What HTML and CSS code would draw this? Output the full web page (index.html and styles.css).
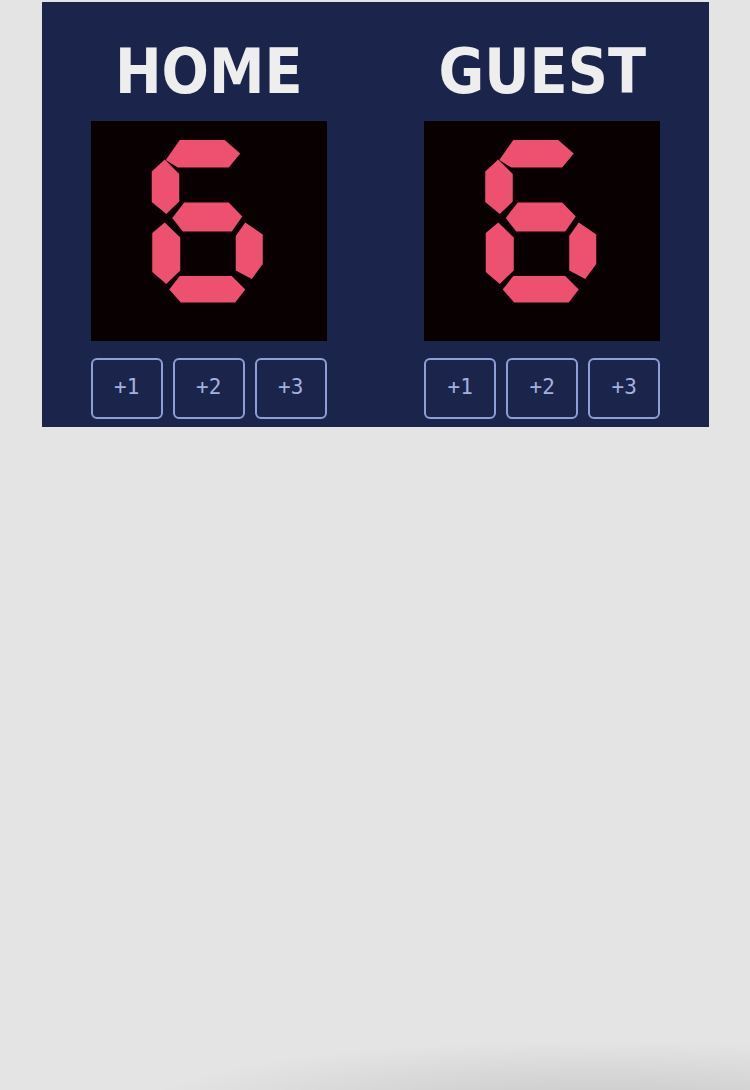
FILE: index.html
```html
<!DOCTYPE html>
<html lang="en">
<head>
<meta charset="utf-8">
<title>Scoreboard</title>
<link rel="stylesheet" href="styles.css">
</head>
<body>
<main class="scoreboard">
  <section class="team">
    <h2 class="team-name">HOME</h2>
    <div class="score-box">
      <div class="digit">
        <span class="seg seg-a"></span>
        <span class="seg seg-f"></span>
        <span class="seg seg-g"></span>
        <span class="seg seg-e"></span>
        <span class="seg seg-c"></span>
        <span class="seg seg-d"></span>
        <span class="digit-text">6</span>
      </div>
    </div>
    <div class="buttons">
      <button class="btn">+1</button>
      <button class="btn">+2</button>
      <button class="btn">+3</button>
    </div>
  </section>
  <section class="team">
    <h2 class="team-name">GUEST</h2>
    <div class="score-box">
      <div class="digit">
        <span class="seg seg-a"></span>
        <span class="seg seg-f"></span>
        <span class="seg seg-g"></span>
        <span class="seg seg-e"></span>
        <span class="seg seg-c"></span>
        <span class="seg seg-d"></span>
        <span class="digit-text">6</span>
      </div>
    </div>
    <div class="buttons">
      <button class="btn">+1</button>
      <button class="btn">+2</button>
      <button class="btn">+3</button>
    </div>
  </section>
</main>
</body>
</html>
```
FILE: styles.css
```css
html {
  height: 100%;
}
body {
  margin: 0;
  min-height: 100%;
  background-color: #e4e4e4;
  background-image: radial-gradient(ellipse 470px 72px at 600px 1112px, rgba(0,0,0,0.13), rgba(0,0,0,0) 100%);
  background-repeat: no-repeat;
  font-family: "DejaVu Sans", sans-serif;
}
.scoreboard {
  margin: 2px 0 0 42px;
  width: 667px;
  background: #1b244a;
  display: flex;
  justify-content: space-around;
  padding: 34px 0 8px;
}
.team {
  width: 236px;
  display: flex;
  flex-direction: column;
}
.team-name {
  margin: 0 0 13px;
  font-family: "DejaVu Sans Condensed", "DejaVu Sans", sans-serif;
  font-stretch: semi-condensed;
  font-weight: bold;
  font-size: 62px;
  line-height: 72px;
  color: #eeeeee;
  text-align: center;
}
.score-box {
  height: 220px;
  background: #080001;
  display: flex;
  justify-content: center;
  padding-top: 18px;
  box-sizing: border-box;
}
.digit {
  position: relative;
  width: 118px;
  height: 166px;
}
.seg {
  position: absolute;
  inset: 0;
  background: #ee5070;
}
.seg-a { clip-path: polygon(30px 1px, 75px 1px, 90.5px 14.5px, 79px 28.5px, 28px 28.5px, 16px 21px); }
.seg-f { clip-path: polygon(15px 20.5px, 29.5px 35px, 29.5px 62.5px, 16.5px 75px, 2px 63px, 2px 32.5px); }
.seg-g { clip-path: polygon(34.5px 63.5px, 79px 63.5px, 92.5px 77.5px, 82px 92.5px, 33px 92.5px, 22.5px 79px); }
.seg-e { clip-path: polygon(15px 83.5px, 30.5px 98.5px, 30.5px 131.5px, 16.5px 145px, 2.5px 133px, 2.5px 94px); }
.seg-c { clip-path: polygon(95.5px 83.5px, 113px 95.5px, 113px 125px, 102px 140px, 86px 131.5px, 86px 97px); }
.seg-d { clip-path: polygon(30px 137px, 82px 137px, 95.5px 150.5px, 85.5px 163.5px, 31px 163.5px, 19.5px 150.5px); }
.digit-text {
  position: absolute;
  inset: 0;
  display: flex;
  align-items: center;
  justify-content: center;
  font-family: "DejaVu Sans", sans-serif;
  font-size: 150px;
  line-height: 1;
  color: transparent;
}
.buttons {
  margin-top: 17px;
  display: flex;
  justify-content: space-between;
}
.btn {
  width: 72px;
  height: 61px;
  border: 2px solid #8d9fd6;
  border-radius: 6px;
  background: transparent;
  color: #a3b1e0;
  font-family: "DejaVu Sans Mono", monospace;
  font-size: 21px;
  padding: 0 0 3px;
}
```
